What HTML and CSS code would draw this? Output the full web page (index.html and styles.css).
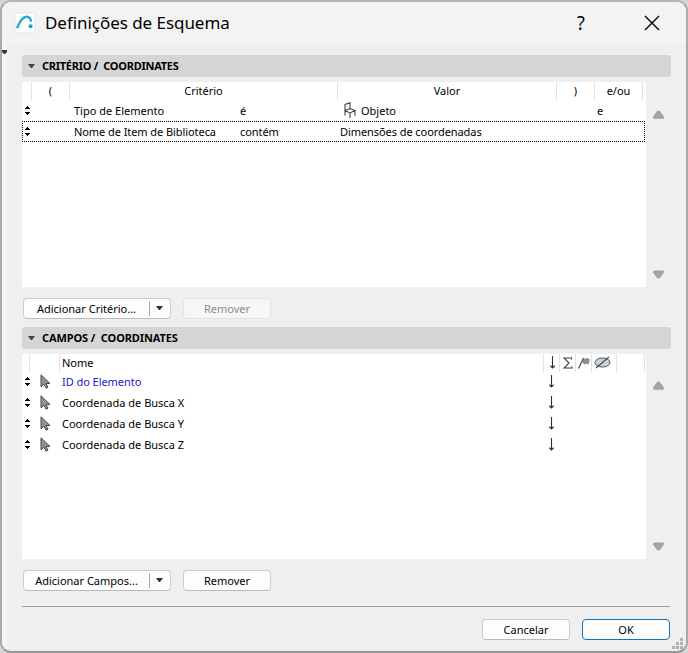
FILE: index.html
```
<!DOCTYPE html>
<html lang="pt">
<head>
<meta charset="utf-8">
<title>Definições de Esquema</title>
<link rel="stylesheet" href="styles.css">
</head>
<body>
<svg class="defs" width="0" height="0">
  <symbol id="sort" viewBox="0 0 5 9"><path d="M2 0h1v1h1v1h1v1H0V2h1V1h1zM0 6h5v1H4v1H3v1H2V8H1V7H0z"/></symbol>
  <symbol id="caret" viewBox="0 0 7 4"><path d="M0 0h7L4 4H3z"/></symbol>
  <symbol id="down" viewBox="0 0 5 13"><path d="M2.5 0v12M.3 9.700l2.200 2.300 2.200-2.300" fill="none" stroke="#263238" stroke-width="1.100"/></symbol>
  <symbol id="up-arrow" viewBox="0 0 12 9"><path d="M4.500 .8Q6-.4 7.500 .8L11.700 6.500Q12.300 9 10.800 9H1.200Q-.3 9 .3 6.500z"/></symbol>
  <symbol id="cursor" viewBox="0 0 11 15"><path d="M1 .8v12l3-2.600 2 4 2-1-2-3.700h4z" fill="#8d9499" stroke="#424b51" stroke-width="1"/></symbol>
</svg>
<main class="window">
  <header class="titlebar">
    <svg class="app-icon" viewBox="0 0 22 22"><rect x="1" y="1" width="20" height="20" rx="2" fill="#fff" stroke="#e3e5e6"/><path d="M3 16.300C5.500 10 8.500 4.500 12.500 4.700c3 .1 4.300 2.400 4.700 5" fill="none" stroke="#29acd2" stroke-width="2.400"/><rect x="14.800" y="12.500" width="3.600" height="3.600" rx=".8" fill="#129fca"/></svg>
    <h1>Definições de Esquema</h1>
    <span class="help">?</span>
    <svg class="close" viewBox="0 0 16 16"><path d="M1 1l14 14M15 1L1 15" stroke="#111" stroke-width="1.500"/></svg>
  </header>
  <div class="content">
    <svg class="side-caret" viewBox="0 0 5 4"><path d="M0 0h5v2L3 4H2L0 2z"/></svg>
    <div class="bar criteria-bar"><svg><use href="#caret"/></svg><span>CRITÉRIO /&nbsp; COORDINATES</span></div>
    <section class="panel">
      <div class="list">
        <div class="head criteria-head"><span></span><span>(</span><span>Critério</span><span>Valor</span><span>)</span><span>e/ou</span></div>
        <div class="criteria">
          <svg class="sort"><use href="#sort"/></svg><span>Tipo de Elemento</span><span>é</span>
          <span class="object"><svg viewBox="0 0 12 16"><path d="M1 13.500V2.500L6 .8v6.700M1 8.500L6 6.500l5 2-5 2.500zM6 11v5M11 8.500V14" fill="none" stroke="#3b474e" stroke-width="1.100"/></svg>Objeto</span><span>e</span>
        </div>
        <div class="criteria focused">
          <svg class="sort"><use href="#sort"/></svg><span>Nome de Item de Biblioteca</span><span>contém</span><span>Dimensões de coordenadas</span><span></span>
        </div>
      </div>
      <div class="scroll"><svg><use href="#up-arrow"/></svg><svg class="flip"><use href="#up-arrow"/></svg></div>
    </section>
    <div class="actions">
      <button class="split"><span>Adicionar Critério...</span><i></i><svg><use href="#caret"/></svg></button>
      <button class="disabled"><span>Remover</span></button>
    </div>
    <div class="bar"><svg><use href="#caret"/></svg><span>CAMPOS /&nbsp; COORDINATES</span></div>
    <section class="panel fields">
      <div class="list">
        <div class="head field-head"><span></span><span></span><span class="name">Nome</span>
          <span><svg class="down"><use href="#down"/></svg></span>
          <span><svg width="10" height="12" viewBox="0 0 10 12"><path d="M8.500 2.500V1H1l5 5-5 5h8V9.500" fill="none" stroke="#34434a" stroke-width="1.100"/></svg></span>
          <span><svg width="12" height="12" viewBox="0 0 12 12"><path d="M5.500 1.500l2 .3L9 .7l3 1.800L10.500 7.500 8 6.800 6.500 7.500 4 5z" fill="#8b9398"/><path d="M.5 11.500L5.500 1" stroke="#3d484e" stroke-width="1.100"/></svg></span>
          <span><svg width="17" height="13" viewBox="0 0 17 13"><ellipse cx="8.500" cy="6.500" rx="7.500" ry="4.500" fill="#ccd0d3" stroke="#46535a"/><path d="M2 12L15 .8" stroke="#34434a" stroke-width="1.100"/></svg></span><span></span>
        </div>
        <div class="field selected"><svg class="sort"><use href="#sort"/></svg><svg class="cursor"><use href="#cursor"/></svg><span>ID do Elemento</span><svg class="down"><use href="#down"/></svg></div>
        <div class="field"><svg class="sort"><use href="#sort"/></svg><svg class="cursor"><use href="#cursor"/></svg><span>Coordenada de Busca X</span><svg class="down"><use href="#down"/></svg></div>
        <div class="field"><svg class="sort"><use href="#sort"/></svg><svg class="cursor"><use href="#cursor"/></svg><span>Coordenada de Busca Y</span><svg class="down"><use href="#down"/></svg></div>
        <div class="field"><svg class="sort"><use href="#sort"/></svg><svg class="cursor"><use href="#cursor"/></svg><span>Coordenada de Busca Z</span><svg class="down"><use href="#down"/></svg></div>
      </div>
      <div class="scroll"><svg><use href="#up-arrow"/></svg><svg class="flip"><use href="#up-arrow"/></svg></div>
    </section>
    <div class="actions">
      <button class="split"><span>Adicionar Campos...</span><i></i><svg><use href="#caret"/></svg></button>
      <button><span>Remover</span></button>
    </div>
    <footer><button><span>Cancelar</span></button><button class="primary"><span>OK</span></button></footer>
  </div>
  <svg class="grip" viewBox="0 0 11 11"><path d="M8 0h3v3H8zM4 4h3v3H4zM8 4h3v3H8zM0 8h3v3H0zM4 8h3v3H4zM8 8h3v3H8z" fill="#b0b0b0"/></svg>
</main>
</body>
</html>
```
FILE: styles.css
```
* { box-sizing: border-box; }
body { margin: 0; background: #d6d6d6; font: 11px/18px "Noto Sans", "Open Sans", sans-serif; color: #000; overflow: hidden; }
svg { display: block; flex: none; }
.defs { position: absolute; }
.window { position: relative; width: 688px; height: 653px; border: 2px solid #aaa; border-top-color: #b5b5b5; border-bottom-color: #999; border-radius: 11px; background: #efefef; overflow: hidden; }
.titlebar { display: flex; align-items: center; height: 43px; padding: 0 26px 2px 12px; background: #f3f3f3; }
.app-icon { width: 22px; height: 22px; }
h1 { margin: 0 0 0 9px; flex: 1; font-weight: 400; font-size: 17px; line-height: 24px; letter-spacing: -.05px; white-space: nowrap; }
.help { width: 12px; margin-right: 57px; font-size: 20px; line-height: 24px; text-align: center; transform: scaleX(.9); }
.close { width: 16px; height: 16px; }
.content { position: relative; height: 606px; padding: 10px 15px 0; border-left: 5px solid #f5f5f5; }
.side-caret { position: absolute; left: -5px; top: 5px; width: 5px; height: 4px; fill: #333; }
.bar { display: flex; align-items: center; width: 649px; height: 22px; padding-left: 6px; gap: 7px; border-radius: 3px; background: #d5d5d5; font-weight: 700; }
.bar svg { width: 7px; height: 4px; fill: #444; }
.bar span { letter-spacing: -.1px; white-space: nowrap; }
.criteria-bar span { letter-spacing: -.26px; }
.panel { display: flex; height: 205px; margin-top: 5px; }
.list { width: 624px; background: #fff; }
.head { display: grid; height: 18px; }
.head span { display: flex; align-items: center; justify-content: center; border-right: 1px solid #e2e2e2; }
.criteria-head { grid-template-columns: 10px 38px 268px 219px 38px 48px; margin-bottom: 1px; }
.criteria { display: grid; grid-template-columns: 51px 166px 100px 257px 40px; align-items: center; height: 20px; padding-left: 1px; white-space: nowrap; }
.criteria.focused { width: 623px; height: 21px; border: 1px dotted #000; padding-left: 0; letter-spacing: -.07px; }
.sort { width: 5px; height: 9px; margin: -1px 0 0 2px; }
.object { display: flex; align-items: center; margin-left: 4px; gap: 5px; }
.object svg { width: 12px; height: 16px; margin-top: -2px; }
.scroll { display: flex; flex-direction: column; justify-content: space-between; padding: 28px 0 8px 7px; }
.fields .scroll { padding-top: 27px; }
.scroll svg { width: 11px; height: 9px; fill: #a3a3a3; }
.flip { transform: scaleY(-1); }
.actions { display: flex; gap: 12px; padding-left: 1px; margin: 11px 0 8px; }
button { display: flex; align-items: center; justify-content: center; width: 88px; height: 21px; padding: 0; border: 1px solid #ccc; border-bottom-color: #bbb; border-radius: 4px; background: #fdfdfd; color: #000; font: inherit; }
.split { width: 148px; justify-content: flex-start; }
.split span { width: 125px; white-space: nowrap; }
.split i { width: 1px; height: 15px; background: #aaa; margin-right: 6px; }
.split svg { width: 7px; height: 4px; margin-top: -1px; fill: #333; }
.disabled { color: #8b8b8b; border-color: #e2e2e2; background: #f7f7f7; }
.field-head { grid-template-columns: 8px 30px 484px 16px 16px 16px 25px 28px; height: 17px; }
.head .name { justify-content: flex-start; padding-left: 2px; }
.field { display: grid; grid-template-columns: 17px 23px 486px 10px; align-items: center; height: 21px; }
.field .sort { margin-left: 3px; }
.cursor { width: 11px; height: 15px; margin: -1px 0 0 1px; }
.selected { color: #2518c8; letter-spacing: -.05px; }
.down { width: 5px; height: 13px; margin-left: 1px; }
.field-head svg { margin-top: -1px; }
.field-head span:nth-child(7) svg { margin-left: -3px; }
footer { display: flex; justify-content: flex-end; gap: 12px; width: 648px; margin-top: 15px; padding-top: 12px; border-top: 1px solid #a0a0a0; }
footer .primary { border-color: #0877c9; }
.grip { position: absolute; right: 3px; bottom: 2px; width: 11px; height: 11px; }
```
